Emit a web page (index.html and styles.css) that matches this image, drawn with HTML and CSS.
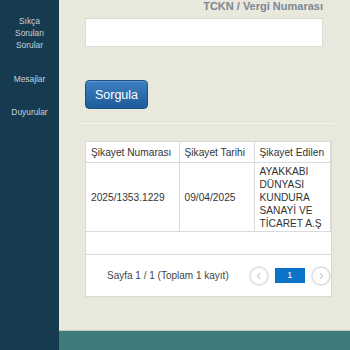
FILE: index.html
```html
<!DOCTYPE html>
<html lang="tr">
<head>
    <meta charset="UTF-8">
    <meta name="viewport" content="width=device-width, initial-scale=1.0">
    <title>Şikayet Sorgulama</title>
    <link rel="stylesheet" href="styles.css">
</head>
<body>
    <aside class="sidebar">
        <a class="nav-item">Sıkça<br>Sorulan<br>Sorular</a>
        <a class="nav-item nav-messages">Mesajlar</a>
        <a class="nav-item nav-news">Duyurular</a>
    </aside>
    <div class="main">
        <div class="content">
            <form class="query-form">
                <label class="field-label" for="tckn">TCKN / Vergi Numarası</label>
                <input class="field-input" type="text" id="tckn" name="tckn">
                <button class="btn-query" type="button">Sorgula</button>
            </form>
            <div class="result-box">
                <table class="result-table">
                    <colgroup>
                        <col class="col-no">
                        <col class="col-date">
                        <col class="col-firm">
                    </colgroup>
                    <thead>
                        <tr>
                            <th>Şikayet Numarası</th>
                            <th>Şikayet Tarihi</th>
                            <th>Şikayet Edilen</th>
                        </tr>
                    </thead>
                    <tbody>
                        <tr>
                            <td>2025/1353.1229</td>
                            <td>09/04/2025</td>
                            <td>AYAKKABI DÜNYASI KUNDURA SANAYİ VE TİCARET A.Ş</td>
                        </tr>
                    </tbody>
                </table>
                <div class="empty-row"></div>
                <div class="pager">
                    <span class="pager-info">Sayfa 1 / 1 (Toplam 1 kayıt)</span>
                    <span class="pager-arrow pager-prev">
                        <svg width="6" height="8" viewBox="0 0 6 8"><polyline points="4,1 1.5,4 4,7" fill="none" stroke="#d4d4d4" stroke-width="1.4"/></svg>
                    </span>
                    <span class="pager-page">1</span>
                    <span class="pager-arrow pager-next">
                        <svg width="6" height="8" viewBox="0 0 6 8"><polyline points="2,1 4.5,4 2,7" fill="none" stroke="#d4d4d4" stroke-width="1.4"/></svg>
                    </span>
                </div>
            </div>
        </div>
        <footer class="footer"></footer>
    </div>
</body>
</html>
```

FILE: styles.css
```css
body {
    font-family: "Liberation Sans", Arial, sans-serif;
    margin: 0;
    padding: 0;
    height: 350px;
    display: flex;
    overflow: hidden;
}
.sidebar {
    width: 59px;
    flex-shrink: 0;
    background-color: #163b51;
    padding-top: 15px;
    text-align: center;
    color: #c6d0d8;
    font-size: 8.4px;
}
.nav-item {
    display: block;
    line-height: 12px;
}
.nav-messages {
    margin-top: 22px;
}
.nav-news {
    margin-top: 21px;
}
.main {
    flex: 1;
    display: flex;
    flex-direction: column;
    background-color: #e9e8dd;
}
.content {
    flex: 1;
    padding: 0 27px 0 26px;
}
.query-form {
    margin: 0 -12px 0 -5px;
    padding: 0 12px 14px 5px;
    border-bottom: 1px solid #f3f2ec;
}
.field-label {
    display: block;
    text-align: right;
    font-size: 11px;
    font-weight: bold;
    line-height: 13px;
    color: #7b8794;
}
.field-input {
    display: block;
    width: 100%;
    height: 29px;
    margin-top: 5px;
    border: 1px solid #dcdbd3;
    background: #fff;
    box-sizing: border-box;
}
.btn-query {
    display: block;
    width: 63px;
    height: 29px;
    margin-top: 33px;
    padding: 0;
    border: 1px solid #1d5186;
    border-radius: 4px;
    background: linear-gradient(#3d7fc1, #1d5c99);
    box-shadow: inset 0 1px 0 rgba(255,255,255,0.2);
    color: #fff;
    font-family: "Liberation Sans", Arial, sans-serif;
    font-size: 12.5px;
}
.result-box {
    margin-top: 17px;
    margin-right: -9px;
    background: #fff;
    border: 1px solid #d9d9d2;
    border-top: none;
    color: #333;
    font-size: 10.2px;
}
.result-table {
    width: 100%;
    table-layout: fixed;
    border-collapse: collapse;
}
.col-no {
    width: 93px;
}
.col-date {
    width: 75px;
}
.result-table th,
.result-table td {
    border: 1px solid #dadada;
    text-align: left;
    font-weight: normal;
    padding: 0 3px 0 5px;
}
.result-table tr > :first-child {
    border-left: none;
}
.result-table th {
    height: 20px;
}
.result-table td {
    line-height: 13px;
    padding-top: 2px;
    padding-bottom: 1px;
}
.empty-row {
    height: 22px;
}
.pager {
    height: 42px;
    border-top: 1px solid #dadada;
    display: flex;
    align-items: center;
    padding-left: 21px;
    box-sizing: border-box;
    font-size: 10px;
    color: #444;
}
.pager-info {
    margin-right: 20px;
}
.pager-arrow {
    width: 16px;
    height: 16px;
    border: 2px solid #e2e2e2;
    border-radius: 50%;
    display: flex;
    align-items: center;
    justify-content: center;
}
.pager-page {
    width: 30px;
    height: 15px;
    margin: 0 6px;
    background-color: #0b74c9;
    color: #fff;
    font-size: 9px;
    line-height: 15px;
    text-align: center;
}
.footer {
    height: 19px;
    background-color: #3e7b7a;
    border-top: 1px solid #c8c8bf;
}
```
